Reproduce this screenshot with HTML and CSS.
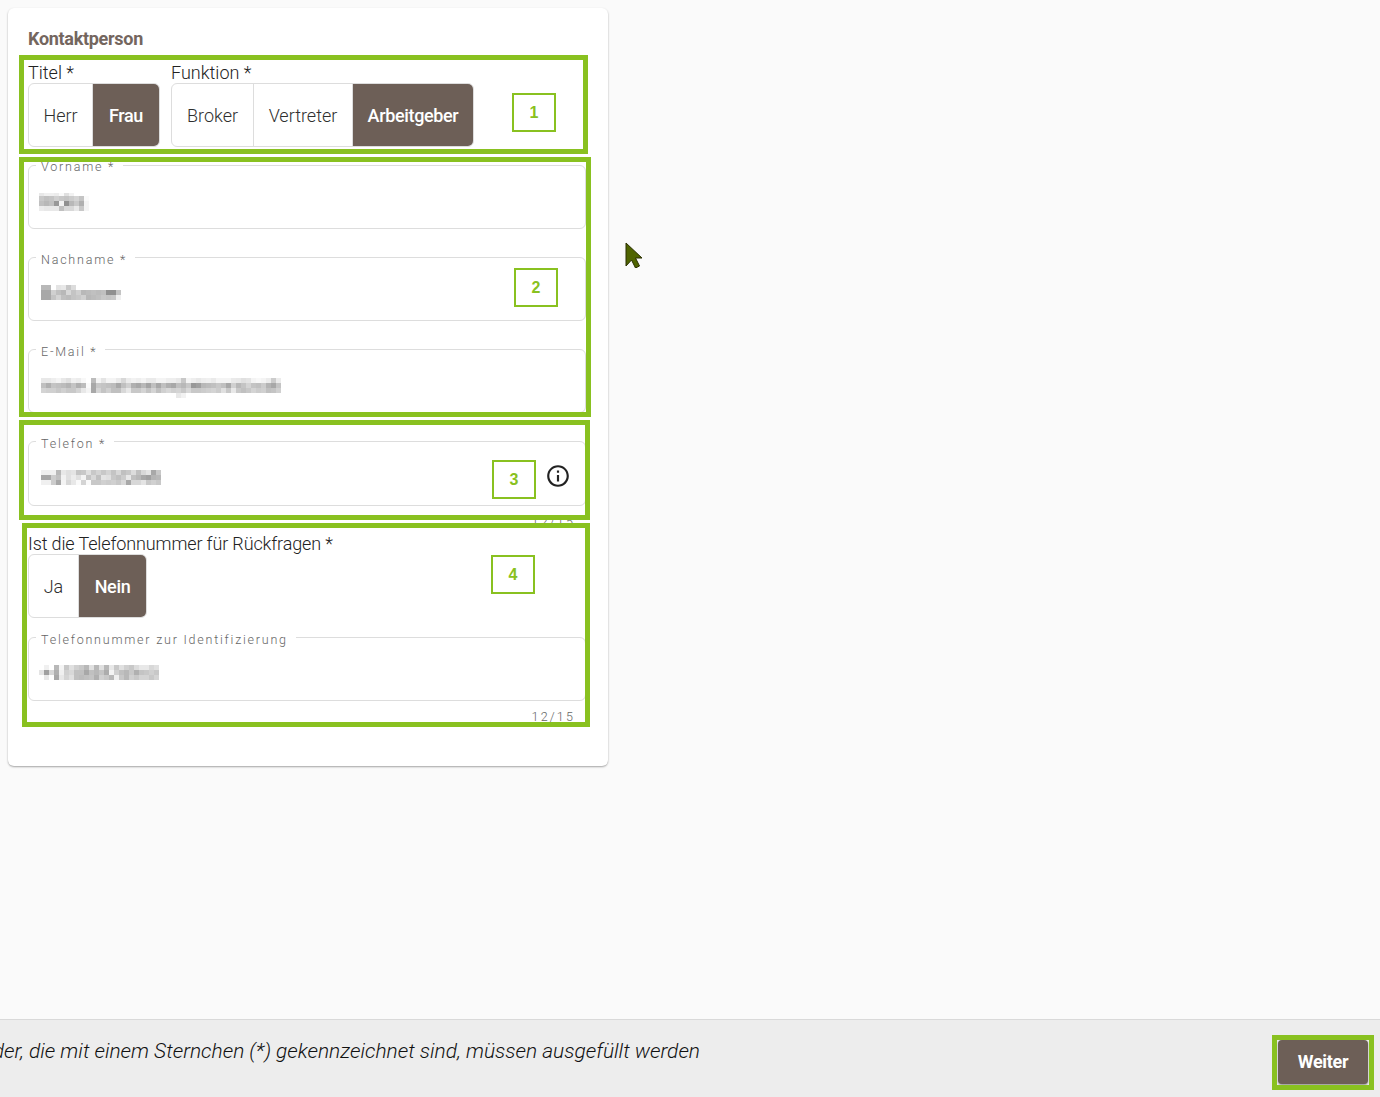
FILE: index.html
```html
<!DOCTYPE html>
<html lang="de">
<head>
<meta charset="utf-8">
<title>Kontaktperson</title>
<link rel="stylesheet" href="styles.css">
</head>
<body>
<main class="content">
  <section class="card">
    <h2 class="card-title">Kontaktperson</h2>
    <div class="toggle-row">
      <div class="toggle-field">
        <div class="label">Titel *</div>
        <div class="toggle-group">
          <span class="toggle t-herr">Herr</span>
          <span class="toggle active t-frau">Frau</span>
        </div>
      </div>
      <div class="toggle-field">
        <div class="label">Funktion *</div>
        <div class="toggle-group">
          <span class="toggle t-broker">Broker</span>
          <span class="toggle t-vertreter">Vertreter</span>
          <span class="toggle active t-arbeit">Arbeitgeber</span>
        </div>
      </div>
    </div>
    <fieldset class="field f-first">
      <legend>Vorname *</legend>
      <svg class="mosaic m-vorname" viewBox="0 0 10 3.6" shape-rendering="crispEdges">
        <g class="r-short">
          <rect x="0" y="0" fill="#e8e8e8"/><rect x="1" y="0" fill="#f0f0f0"/><rect x="2" y="0" fill="#f0f0f0"/><rect x="3" y="0" fill="#ececec"/><rect x="4" y="0" fill="#fafafa"/><rect x="5" y="0" fill="#e0e0e0"/><rect x="6" y="0" fill="#f2f2f2"/>
        </g>
        <rect x="0" y=".6" fill="#c8c8c8"/><rect x="1" y=".6" fill="#c0c0c0"/><rect x="2" y=".6" fill="#c4c4c4"/><rect x="3" y=".6" fill="#d0d0d0"/><rect x="4" y=".6" fill="#c8c8c8"/><rect x="5" y=".6" fill="#c4c4c4"/><rect x="6" y=".6" fill="#cccccc"/><rect x="7" y=".6" fill="#d4d4d4"/><rect x="8" y=".6" fill="#c4c4c4"/><rect x="9" y=".6" fill="#fafafa"/>
        <rect x="0" y="1.6" fill="#c0c0c0"/><rect x="1" y="1.6" fill="#b8b8b8"/><rect x="2" y="1.6" fill="#c0c0c0"/><rect x="3" y="1.6" fill="#989898"/><rect x="4" y="1.6" fill="#f2f2f2"/><rect x="5" y="1.6" fill="#909090"/><rect x="6" y="1.6" fill="#b8b8b8"/><rect x="7" y="1.6" fill="#c8c8c8"/><rect x="8" y="1.6" fill="#b0b0b0"/><rect x="9" y="1.6" fill="#f4f4f4"/>
        <rect x="0" y="2.6" fill="#ececec"/><rect x="1" y="2.6" fill="#e8e8e8"/><rect x="2" y="2.6" fill="#e8e8e8"/><rect x="3" y="2.6" fill="#e8e8e8"/><rect x="4" y="2.6" fill="#c0c0c0"/><rect x="5" y="2.6" fill="#d8d8d8"/><rect x="6" y="2.6" fill="#d8d8d8"/><rect x="7" y="2.6" fill="#e8e8e8"/><rect x="8" y="2.6" fill="#c8c8c8"/><rect x="9" y="2.6" fill="#f4f4f4"/>
      </svg>
    </fieldset>
    <fieldset class="field">
      <legend>Nachname *</legend>
      <svg class="mosaic m-nachname" viewBox="0 0 16 3" shape-rendering="crispEdges">
        <rect x="0" y="0" fill="#b8b8b8"/><rect x="1" y="0" fill="#b8b8b8"/><rect x="3" y="0" fill="#e4e4e4"/><rect x="4" y="0" fill="#e8e8e8"/><rect x="5" y="0" fill="#c8c8c8"/><rect x="6" y="0" fill="#dcdcdc"/>
        <rect x="0" y="1" fill="#a8a8a8"/><rect x="1" y="1" fill="#a8a8a8"/><rect x="2" y="1" fill="#d0d0d0"/><rect x="3" y="1" fill="#c0c0c0"/><rect x="4" y="1" fill="#b8b8b8"/><rect x="5" y="1" fill="#d8d8d8"/><rect x="6" y="1" fill="#c4c4c4"/><rect x="7" y="1" fill="#d0d0d0"/><rect x="8" y="1" fill="#b8b8b8"/><rect x="9" y="1" fill="#bcbcbc"/><rect x="10" y="1" fill="#c0c0c0"/><rect x="11" y="1" fill="#bcbcbc"/><rect x="12" y="1" fill="#c0c0c0"/><rect x="13" y="1" fill="#909090"/><rect x="14" y="1" fill="#909090"/><rect x="15" y="1" fill="#c4c4c4"/>
        <rect x="0" y="2" fill="#a8a8a8"/><rect x="1" y="2" fill="#a8a8a8"/><rect x="2" y="2" fill="#c4c4c4"/><rect x="3" y="2" fill="#d4d4d4"/><rect x="4" y="2" fill="#c0c0c0"/><rect x="5" y="2" fill="#bcbcbc"/><rect x="6" y="2" fill="#c4c4c4"/><rect x="7" y="2" fill="#c8c8c8"/><rect x="8" y="2" fill="#d0d0d0"/><rect x="9" y="2" fill="#b8b8b8"/><rect x="10" y="2" fill="#bcbcbc"/><rect x="11" y="2" fill="#c0c0c0"/><rect x="12" y="2" fill="#c8c8c8"/><rect x="13" y="2" fill="#c4c4c4"/><rect x="14" y="2" fill="#c8c8c8"/><rect x="15" y="2" fill="#f0f0f0"/>
      </svg>
    </fieldset>
    <fieldset class="field">
      <legend>E-Mail *</legend>
      <svg class="mosaic m-email" viewBox="0 0 48 4" shape-rendering="crispEdges">
        <rect x="0" y="0" fill="#e8e8e8"/><rect x="1" y="0" fill="#e8e8e8"/><rect x="2" y="0" fill="#eeeeee"/><rect x="3" y="0" fill="#f4f4f4"/><rect x="4" y="0" fill="#e8e8e8"/><rect x="5" y="0" fill="#e0e0e0"/><rect x="6" y="0" fill="#f0f0f0"/><rect x="7" y="0" fill="#ececec"/><rect x="8" y="0" fill="#f8f8f8"/><rect x="10" y="0" fill="#bcbcbc"/><rect x="11" y="0" fill="#f4f4f4"/><rect x="12" y="0" fill="#e4e4e4"/><rect x="13" y="0" fill="#f4f4f4"/><rect x="14" y="0" fill="#f4f4f4"/><rect x="15" y="0" fill="#eaeaea"/><rect x="16" y="0" fill="#d8d8d8"/><rect x="17" y="0" fill="#ececec"/><rect x="18" y="0" fill="#f2f2f2"/><rect x="19" y="0" fill="#eeeeee"/><rect x="20" y="0" fill="#f4f4f4"/><rect x="21" y="0" fill="#eaeaea"/><rect x="22" y="0" fill="#eaeaea"/><rect x="23" y="0" fill="#f4f4f4"/><rect x="24" y="0" fill="#f4f4f4"/><rect x="25" y="0" fill="#eeeeee"/><rect x="26" y="0" fill="#eeeeee"/><rect x="27" y="0" fill="#e8e8e8"/><rect x="28" y="0" fill="#c8c8c8"/><rect x="29" y="0" fill="#f4f4f4"/><rect x="30" y="0" fill="#eeeeee"/><rect x="31" y="0" fill="#e8e8e8"/><rect x="32" y="0" fill="#eeeeee"/><rect x="33" y="0" fill="#f0f0f0"/><rect x="34" y="0" fill="#eaeaea"/><rect x="35" y="0" fill="#f4f4f4"/><rect x="36" y="0" fill="#f4f4f4"/><rect x="37" y="0" fill="#f4f4f4"/><rect x="38" y="0" fill="#eaeaea"/><rect x="39" y="0" fill="#e8e8e8"/><rect x="40" y="0" fill="#e0e0e0"/><rect x="41" y="0" fill="#e4e4e4"/><rect x="42" y="0" fill="#f4f4f4"/><rect x="43" y="0" fill="#f8f8f8"/><rect x="44" y="0" fill="#f4f4f4"/><rect x="45" y="0" fill="#ececec"/><rect x="46" y="0" fill="#cccccc"/><rect x="47" y="0" fill="#ececec"/>
        <rect x="0" y="1" fill="#c0c0c0"/><rect x="1" y="1" fill="#b0b0b0"/><rect x="2" y="1" fill="#c4c4c4"/><rect x="3" y="1" fill="#c0c0c0"/><rect x="4" y="1" fill="#bcbcbc"/><rect x="5" y="1" fill="#b4b4b4"/><rect x="6" y="1" fill="#c4c4c4"/><rect x="7" y="1" fill="#b0b0b0"/><rect x="8" y="1" fill="#bcbcbc"/><rect x="9" y="1" fill="#fafafa"/><rect x="10" y="1" fill="#a8a8a8"/><rect x="11" y="1" fill="#c8c8c8"/><rect x="12" y="1" fill="#c4c4c4"/><rect x="13" y="1" fill="#c0c0c0"/><rect x="14" y="1" fill="#bcbcbc"/><rect x="15" y="1" fill="#a8a8a8"/><rect x="16" y="1" fill="#c0c0c0"/><rect x="17" y="1" fill="#d0d0d0"/><rect x="18" y="1" fill="#b0b0b0"/><rect x="19" y="1" fill="#a8a8a8"/><rect x="20" y="1" fill="#b8b8b8"/><rect x="21" y="1" fill="#a4a4a4"/><rect x="22" y="1" fill="#c0c0c0"/><rect x="23" y="1" fill="#a8a8a8"/><rect x="24" y="1" fill="#c0c0c0"/><rect x="25" y="1" fill="#b0b0b0"/><rect x="26" y="1" fill="#a8a8a8"/><rect x="27" y="1" fill="#c0c0c0"/><rect x="28" y="1" fill="#b8b8b8"/><rect x="29" y="1" fill="#c8c8c8"/><rect x="30" y="1" fill="#989898"/><rect x="31" y="1" fill="#a0a0a0"/><rect x="32" y="1" fill="#b8b8b8"/><rect x="33" y="1" fill="#bcbcbc"/><rect x="34" y="1" fill="#c0c0c0"/><rect x="35" y="1" fill="#c8c8c8"/><rect x="36" y="1" fill="#c0c0c0"/><rect x="37" y="1" fill="#a8a8a8"/><rect x="38" y="1" fill="#d0d0d0"/><rect x="39" y="1" fill="#b8b8b8"/><rect x="40" y="1" fill="#c4c4c4"/><rect x="41" y="1" fill="#d4d4d4"/><rect x="42" y="1" fill="#c4c4c4"/><rect x="43" y="1" fill="#c0c0c0"/><rect x="44" y="1" fill="#cccccc"/><rect x="45" y="1" fill="#b4b4b4"/><rect x="46" y="1" fill="#a8a8a8"/><rect x="47" y="1" fill="#c4c4c4"/>
        <rect x="0" y="2" fill="#d4d4d4"/><rect x="1" y="2" fill="#d0d0d0"/><rect x="2" y="2" fill="#d0d0d0"/><rect x="3" y="2" fill="#c8c8c8"/><rect x="4" y="2" fill="#d0d0d0"/><rect x="5" y="2" fill="#c8c8c8"/><rect x="6" y="2" fill="#c8c8c8"/><rect x="7" y="2" fill="#d4d4d4"/><rect x="8" y="2" fill="#e8e8e8"/><rect x="9" y="2" fill="#f4f4f4"/><rect x="10" y="2" fill="#a8a8a8"/><rect x="11" y="2" fill="#d4d4d4"/><rect x="12" y="2" fill="#c4c4c4"/><rect x="13" y="2" fill="#d0d0d0"/><rect x="14" y="2" fill="#c0c0c0"/><rect x="15" y="2" fill="#c0c0c0"/><rect x="16" y="2" fill="#d8d8d8"/><rect x="17" y="2" fill="#e8e8e8"/><rect x="18" y="2" fill="#c8c8c8"/><rect x="19" y="2" fill="#c8c8c8"/><rect x="20" y="2" fill="#d4d4d4"/><rect x="21" y="2" fill="#c4c4c4"/><rect x="22" y="2" fill="#d4d4d4"/><rect x="23" y="2" fill="#c0c0c0"/><rect x="24" y="2" fill="#d0d0d0"/><rect x="25" y="2" fill="#d8d8d8"/><rect x="26" y="2" fill="#d0d0d0"/><rect x="27" y="2" fill="#d4d4d4"/><rect x="28" y="2" fill="#c8c8c8"/><rect x="29" y="2" fill="#d8d8d8"/><rect x="30" y="2" fill="#c8c8c8"/><rect x="31" y="2" fill="#c8c8c8"/><rect x="32" y="2" fill="#cccccc"/><rect x="33" y="2" fill="#d0d0d0"/><rect x="34" y="2" fill="#d4d4d4"/><rect x="35" y="2" fill="#cccccc"/><rect x="36" y="2" fill="#e0e0e0"/><rect x="37" y="2" fill="#c8c8c8"/><rect x="38" y="2" fill="#e8e8e8"/><rect x="39" y="2" fill="#c8c8c8"/><rect x="40" y="2" fill="#c0c0c0"/><rect x="41" y="2" fill="#c8c8c8"/><rect x="42" y="2" fill="#d4d4d4"/><rect x="43" y="2" fill="#cccccc"/><rect x="44" y="2" fill="#d0d0d0"/><rect x="45" y="2" fill="#c0c0c0"/><rect x="46" y="2" fill="#c4c4c4"/><rect x="47" y="2" fill="#d0d0d0"/>
        <rect x="27" y="3" fill="#e8e8e8"/><rect x="28" y="3" fill="#f2f2f2"/>
      </svg>
    </fieldset>
    <fieldset class="field field-tel">
      <legend>Telefon *</legend>
      <svg class="mosaic m-tel" viewBox="0 0 24 3" shape-rendering="crispEdges">
        <rect x="0" y="0" fill="#f0f0f0"/><rect x="1" y="0" fill="#f0f0f0"/><rect x="2" y="0" fill="#f0f0f0"/><rect x="3" y="0" fill="#b8b8b8"/><rect x="4" y="0" fill="#e8e8e8"/><rect x="5" y="0" fill="#e0e0e0"/><rect x="6" y="0" fill="#e4e4e4"/><rect x="7" y="0" fill="#c4c4c4"/><rect x="8" y="0" fill="#c8c8c8"/><rect x="9" y="0" fill="#e0e0e0"/><rect x="10" y="0" fill="#c8c8c8"/><rect x="11" y="0" fill="#d4d4d4"/><rect x="12" y="0" fill="#c8c8c8"/><rect x="13" y="0" fill="#d4d4d4"/><rect x="14" y="0" fill="#c4c4c4"/><rect x="15" y="0" fill="#d8d8d8"/><rect x="16" y="0" fill="#c0c0c0"/><rect x="17" y="0" fill="#c8c8c8"/><rect x="18" y="0" fill="#dcdcdc"/><rect x="19" y="0" fill="#c0c0c0"/><rect x="20" y="0" fill="#d8d8d8"/><rect x="21" y="0" fill="#e4e4e4"/><rect x="22" y="0" fill="#a8a8a8"/><rect x="23" y="0" fill="#c8c8c8"/>
        <rect x="0" y="1" fill="#a8a8a8"/><rect x="1" y="1" fill="#a8a8a8"/><rect x="2" y="1" fill="#cccccc"/><rect x="3" y="1" fill="#c0c0c0"/><rect x="4" y="1" fill="#f2f2f2"/><rect x="5" y="1" fill="#e0e0e0"/><rect x="6" y="1" fill="#ececec"/><rect x="7" y="1" fill="#e0e0e0"/><rect x="8" y="1" fill="#f4f4f4"/><rect x="9" y="1" fill="#c4c4c4"/><rect x="10" y="1" fill="#d8d8d8"/><rect x="11" y="1" fill="#c0c0c0"/><rect x="12" y="1" fill="#e4e4e4"/><rect x="13" y="1" fill="#e0e0e0"/><rect x="14" y="1" fill="#c8c8c8"/><rect x="15" y="1" fill="#c0c0c0"/><rect x="16" y="1" fill="#cccccc"/><rect x="17" y="1" fill="#e8e8e8"/><rect x="18" y="1" fill="#c0c0c0"/><rect x="19" y="1" fill="#b8b8b8"/><rect x="20" y="1" fill="#a8a8a8"/><rect x="21" y="1" fill="#a0a0a0"/><rect x="22" y="1" fill="#b4b4b4"/><rect x="23" y="1" fill="#b8b8b8"/>
        <rect x="0" y="2" fill="#f0f0f0"/><rect x="1" y="2" fill="#f0f0f0"/><rect x="2" y="2" fill="#cccccc"/><rect x="3" y="2" fill="#a8a8a8"/><rect x="4" y="2" fill="#f4f4f4"/><rect x="5" y="2" fill="#d8d8d8"/><rect x="6" y="2" fill="#e8e8e8"/><rect x="7" y="2" fill="#fafafa"/><rect x="8" y="2" fill="#d4d4d4"/><rect x="9" y="2" fill="#fafafa"/><rect x="10" y="2" fill="#c8c8c8"/><rect x="11" y="2" fill="#c8c8c8"/><rect x="12" y="2" fill="#d0d0d0"/><rect x="13" y="2" fill="#cccccc"/><rect x="14" y="2" fill="#d0d0d0"/><rect x="15" y="2" fill="#c8c8c8"/><rect x="16" y="2" fill="#d8d8d8"/><rect x="17" y="2" fill="#a8a8a8"/><rect x="18" y="2" fill="#d8d8d8"/><rect x="19" y="2" fill="#d8d8d8"/><rect x="20" y="2" fill="#e4e4e4"/><rect x="21" y="2" fill="#c8c8c8"/><rect x="22" y="2" fill="#d0d0d0"/><rect x="23" y="2" fill="#c8c8c8"/>
      </svg>
      <svg class="info-icon" viewBox="0 0 24 24"><path d="M11 7h2v2h-2zm0 4h2v6h-2zm1-9C6.480 2 2 6.480 2 12s4.480 10 10 10 10-4.480 10-10S17.520 2 12 2zm0 18c-4.410 0-8-3.590-8-8s3.590-8 8-8 8 3.590 8 8-3.590 8-8 8z"/></svg>
    </fieldset>
    <div class="hint hint-tel">12/15</div>
    <div class="label label-q">Ist die Telefonnummer für Rückfragen *</div>
    <div class="toggle-group">
      <span class="toggle t-ja">Ja</span>
      <span class="toggle active t-nein">Nein</span>
    </div>
    <fieldset class="field f-ident">
      <legend>Telefonnummer zur Identifizierung</legend>
      <svg class="mosaic m-ident" viewBox="0 0 24 3" shape-rendering="crispEdges">
        <rect x="1" y="0" fill="#f0f0f0"/><rect x="3" y="0" fill="#b8b8b8"/><rect x="4" y="0" fill="#f4f4f4"/><rect x="5" y="0" fill="#c8c8c8"/><rect x="6" y="0" fill="#e0e0e0"/><rect x="7" y="0" fill="#d0d0d0"/><rect x="8" y="0" fill="#c8c8c8"/><rect x="9" y="0" fill="#b8b8b8"/><rect x="10" y="0" fill="#e0e0e0"/><rect x="11" y="0" fill="#b8b8b8"/><rect x="12" y="0" fill="#e0e0e0"/><rect x="13" y="0" fill="#b8b8b8"/><rect x="14" y="0" fill="#e8e8e8"/><rect x="15" y="0" fill="#c8c8c8"/><rect x="16" y="0" fill="#e0e0e0"/><rect x="17" y="0" fill="#d0d0d0"/><rect x="18" y="0" fill="#c8c8c8"/><rect x="19" y="0" fill="#dcdcdc"/><rect x="20" y="0" fill="#e8e8e8"/><rect x="21" y="0" fill="#e8e8e8"/><rect x="22" y="0" fill="#d8d8d8"/><rect x="23" y="0" fill="#e0e0e0"/>
        <rect x="0" y="1" fill="#e4e4e4"/><rect x="1" y="1" fill="#a0a0a0"/><rect x="2" y="1" fill="#d8d8d8"/><rect x="3" y="1" fill="#b0b0b0"/><rect x="4" y="1" fill="#f0f0f0"/><rect x="5" y="1" fill="#d0d0d0"/><rect x="6" y="1" fill="#d8d8d8"/><rect x="7" y="1" fill="#c0c0c0"/><rect x="8" y="1" fill="#c0c0c0"/><rect x="9" y="1" fill="#a8a8a8"/><rect x="10" y="1" fill="#c0c0c0"/><rect x="11" y="1" fill="#b8b8b8"/><rect x="12" y="1" fill="#c4c4c4"/><rect x="13" y="1" fill="#acacac"/><rect x="14" y="1" fill="#f4f4f4"/><rect x="15" y="1" fill="#d0d0d0"/><rect x="16" y="1" fill="#c0c0c0"/><rect x="17" y="1" fill="#b8b8b8"/><rect x="18" y="1" fill="#c8c8c8"/><rect x="19" y="1" fill="#b0b0b0"/><rect x="20" y="1" fill="#c4c4c4"/><rect x="21" y="1" fill="#c8c8c8"/><rect x="22" y="1" fill="#d0d0d0"/><rect x="23" y="1" fill="#c8c8c8"/>
        <rect x="1" y="2" fill="#e8e8e8"/><rect x="3" y="2" fill="#a8a8a8"/><rect x="4" y="2" fill="#e8e8e8"/><rect x="5" y="2" fill="#d4d4d4"/><rect x="6" y="2" fill="#e0e0e0"/><rect x="7" y="2" fill="#c0c0c0"/><rect x="8" y="2" fill="#bcbcbc"/><rect x="9" y="2" fill="#c0c0c0"/><rect x="10" y="2" fill="#c4c4c4"/><rect x="11" y="2" fill="#b0b0b0"/><rect x="12" y="2" fill="#d0d0d0"/><rect x="13" y="2" fill="#c8c8c8"/><rect x="14" y="2" fill="#b8b8b8"/><rect x="15" y="2" fill="#f0f0f0"/><rect x="16" y="2" fill="#c8c8c8"/><rect x="17" y="2" fill="#b8b8b8"/><rect x="18" y="2" fill="#d0d0d0"/><rect x="19" y="2" fill="#c8c8c8"/><rect x="20" y="2" fill="#d4d4d4"/><rect x="21" y="2" fill="#d4d4d4"/><rect x="22" y="2" fill="#c8c8c8"/><rect x="23" y="2" fill="#d4d4d4"/>
      </svg>
    </fieldset>
    <div class="hint hint-ident">12/15</div>
  </section>
</main>
<footer class="footer">
  <div class="footer-note"><span>Alle Felder, die mit einem Sternchen (*) gekennzeichnet sind, müssen ausgefüllt werden</span></div>
  <button class="next-btn" type="button">Weiter</button>
</footer>

<div class="mark box-1"></div>
<div class="mark box-2"></div>
<div class="mark box-3"></div>
<div class="mark box-4"></div>
<div class="mark box-btn"></div>
<div class="num num-1">1</div>
<div class="num num-2">2</div>
<div class="num num-3">3</div>
<div class="num num-4">4</div>
<svg class="cursor" viewBox="0 0 17 26"><path d="M1 1v23l5.500-6 4 8 4-2-4-8h6.500z" fill="#4f6400" stroke="#2a2f00" stroke-width="1"/></svg>
</body>
</html>
```
FILE: styles.css
```css
* { box-sizing: border-box; }
html, body { margin: 0; height: 100%; }
body {
  width: 1380px;
  height: 1097px;
  overflow: hidden;
  background: #fafafa;
  font-family: Roboto, "Liberation Sans", sans-serif;
  color: #2b2b2b;
  display: flex;
  flex-direction: column;
  position: relative;
}
.content { flex: 1; padding: 8px; }
.card {
  width: 600px;
  height: 758px;
  background: #fff;
  border-radius: 6px;
  box-shadow: 0 1px 2px rgba(0,0,0,.35);
  padding: 21px 21px 0 20px;
}
.card-title {
  margin: 0;
  font-size: 18px;
  line-height: 20px;
  font-weight: 700;
  color: #74665e;
  letter-spacing: -.3px;
}
.toggle-row { display: flex; gap: 11px; margin-top: 13px; }
.label { font-size: 18px; line-height: 21px; font-weight: 300; color: #222; }
.toggle-group {
  display: flex;
  height: 64px;
  width: max-content;
  border: 1px solid #ddd;
  border-radius: 6px;
  overflow: hidden;
}
.toggle {
  display: flex;
  align-items: center;
  justify-content: center;
  font-size: 18px;
  font-weight: 300;
  color: #2f2f2f;
  border-right: 1px solid #ddd;
}
.toggle:last-child { border-right: 0; }
.toggle.active {
  background: #6d5f57;
  color: #fff;
  font-weight: 500;
  letter-spacing: -.35px;
  padding-right: 1px;
  margin: -1px -1px -1px 0;
}
.t-herr { width: 64px; }
.t-frau { width: 67px; }
.t-broker { width: 82px; }
.t-vertreter { width: 99px; }
.t-arbeit { width: 121px; }
.t-ja { width: 50px; }
.t-nein { width: 68px; }

.field {
  position: relative;
  display: flex;
  align-items: flex-start;
  margin: 19px 0 0;
  padding: 0 12px;
  height: 73px;
  border: 1px solid #ddd;
  border-radius: 6px;
  min-width: 0;
  width: 558px;
}
.field legend {
  padding: 4px 8px 0 5px;
  margin-left: -5px;
  font-size: 12.5px;
  line-height: 15px;
  letter-spacing: 1.78px;
  font-weight: 300;
  color: #666;
}
.f-first { margin-top: 9px; }
.f-first legend { padding-top: 3px; padding-bottom: 1px; }
.field-tel { height: 74px; }
.mosaic { display: block; flex: none; }
.mosaic rect { width: 1px; height: 1px; }
.m-vorname { width: 50px; height: 18px; margin: 18px 0 0 -2px; }
.m-nachname { width: 80px; height: 15px; margin-top: 18px; }
.m-email { width: 240px; height: 20px; margin-top: 19px; }
.m-tel { width: 120px; height: 15px; margin-top: 19px; }
.m-ident { width: 120px; height: 15px; margin: 18px 0 0 -2px; }
.info-icon { position: absolute; left: 516px; top: 12px; width: 26px; height: 26px; fill: #222; }
.hint {
  font-size: 12.5px;
  line-height: 15px;
  letter-spacing: 2.15px;
  font-weight: 300;
  color: #666;
  text-align: right;
  padding-right: 11px;
  width: 558px;
  margin-top: 8px;
}
.label-q { margin-top: 4px; letter-spacing: -.13px; }
.f-ident { margin-top: 10px; }

.footer {
  flex: none;
  height: 78px;
  background: #ededed;
  border-top: 1px solid #d9d9d9;
  display: flex;
  align-items: flex-start;
  justify-content: space-between;
}
.footer-note {
  width: 700px;
  height: 30px;
  margin-top: 17px;
  overflow: hidden;
  display: flex;
  justify-content: flex-end;
  white-space: nowrap;
  font-size: 20.9px;
  line-height: 28px;
  font-style: italic;
  font-weight: 300;
  color: #111;
  flex: none;
}
.next-btn {
  width: 90px;
  height: 44px;
  margin: 20px 12px 0 0;
  padding: 0 0 2px;
  background: #6d5f57;
  color: #fff;
  border: 0;
  border-radius: 4px;
  font: 700 18px Roboto, "Liberation Sans", sans-serif;
  letter-spacing: -.3px;
  box-shadow: 0 1px 2px rgba(0,0,0,.4);
}

.mark { position: absolute; border: 5px solid #89c120; pointer-events: none; }
.box-1 { left: 19px; top: 55px; width: 569px; height: 99px; }
.box-2 { left: 19px; top: 157px; width: 572px; height: 260px; }
.box-3 { left: 19px; top: 420px; width: 571px; height: 100px; }
.box-4 { left: 22px; top: 523px; width: 568px; height: 204px; }
.box-btn { left: 1272px; top: 1035px; width: 102px; height: 55px; }
.num {
  position: absolute;
  width: 44px;
  height: 39px;
  border: 2px solid #89c120;
  display: flex;
  align-items: center;
  justify-content: center;
  font: 700 16px "Liberation Sans", Arial, sans-serif;
  color: #89c120;
  background: #fff;
}
.num-1 { left: 512px; top: 93px; }
.num-2 { left: 514px; top: 268px; }
.num-3 { left: 492px; top: 460px; }
.num-4 { left: 491px; top: 555px; }
.cursor { position: absolute; left: 625px; top: 242px; width: 17px; height: 26px; }
```
